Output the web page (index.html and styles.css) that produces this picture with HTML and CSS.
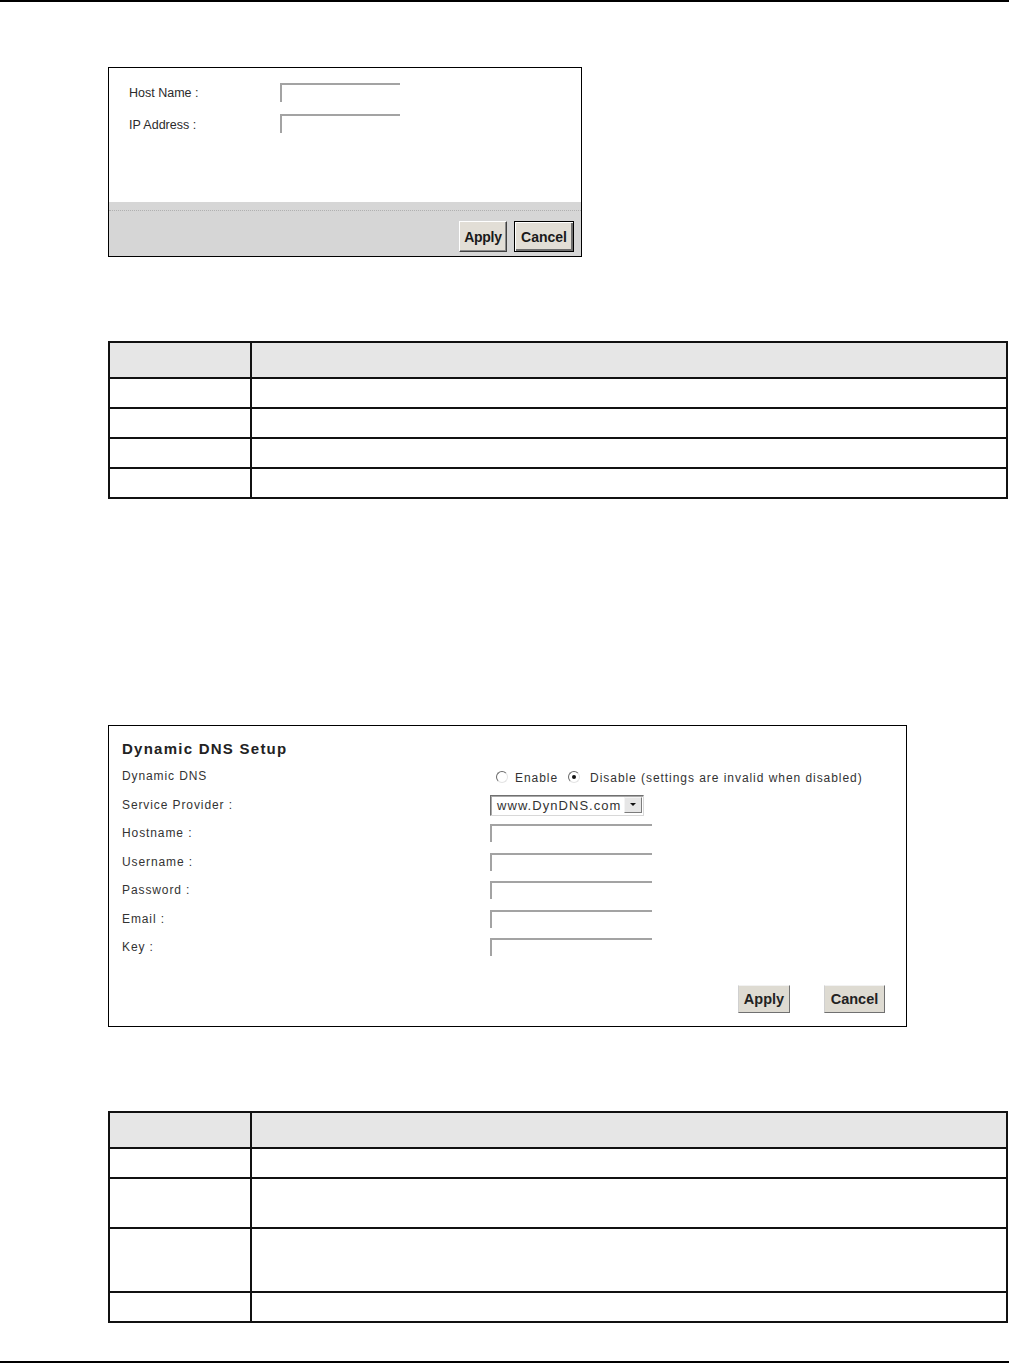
FILE: index.html
```html
<!DOCTYPE html>
<html lang="en">
<head>
    <meta charset="UTF-8">
    <meta name="viewport" content="width=device-width, initial-scale=1.0">
    <title>Dynamic DNS</title>
    <link rel="stylesheet" href="styles.css">
</head>
<body>
    <div class="rule rule-top"></div>

    <div class="page">
        <!-- host entry screen -->
        <div class="shot shot-host">
            <div class="shot-body">
                <div class="host-row">
                    <label>Host Name :</label>
                    <input type="text" class="text-box">
                </div>
                <div class="host-row">
                    <label>IP Address :</label>
                    <input type="text" class="text-box">
                </div>
            </div>
            <div class="shot-footer">
                <div class="footer-line"></div>
                <div class="btn-row">
                    <button class="btn btn-apply">Apply</button>
                    <button class="btn btn-cancel btn-focus">Cancel</button>
                </div>
            </div>
        </div>

        <table class="desc-table table-one">
            <tr class="head-row"><th class="col-label"></th><th></th></tr>
            <tr><td></td><td></td></tr>
            <tr><td></td><td></td></tr>
            <tr><td></td><td></td></tr>
            <tr><td></td><td></td></tr>
        </table>

        <!-- dynamic dns screen -->
        <div class="shot shot-ddns">
            <h3 class="ddns-title">Dynamic DNS Setup</h3>
            <div class="ddns-grid">
                <div class="ddns-label">Dynamic DNS</div>
                <div class="ddns-field radio-line">
                    <span class="radio"></span><span class="radio-text">Enable</span>
                    <span class="radio radio-on"></span><span class="radio-text">Disable (settings are invalid when disabled)</span>
                </div>

                <div class="ddns-label">Service Provider :</div>
                <div class="ddns-field">
                    <div class="select-box">
                        <span class="select-value">www.DynDNS.com</span>
                        <span class="select-arrow"></span>
                    </div>
                </div>

                <div class="ddns-label">Hostname :</div>
                <div class="ddns-field"><input type="text" class="text-box text-wide"></div>

                <div class="ddns-label">Username :</div>
                <div class="ddns-field"><input type="text" class="text-box text-wide"></div>

                <div class="ddns-label">Password :</div>
                <div class="ddns-field"><input type="password" class="text-box text-wide"></div>

                <div class="ddns-label">Email :</div>
                <div class="ddns-field"><input type="text" class="text-box text-wide"></div>

                <div class="ddns-label">Key :</div>
                <div class="ddns-field"><input type="text" class="text-box text-wide"></div>
            </div>
            <div class="ddns-buttons">
                <button class="btn btn-ddns btn-ddns-apply">Apply</button>
                <button class="btn btn-ddns btn-ddns-cancel">Cancel</button>
            </div>
        </div>

        <table class="desc-table table-two">
            <tr class="head-row"><th class="col-label"></th><th></th></tr>
            <tr><td></td><td></td></tr>
            <tr class="row-tall"><td></td><td></td></tr>
            <tr class="row-taller"><td></td><td></td></tr>
            <tr><td></td><td></td></tr>
        </table>
    </div>

    <div class="rule rule-bottom"></div>
</body>
</html>
```

FILE: styles.css
```css
:root {
    --ink: #2b2b2b;
    --frame-gray: #a3a3a3;
    --footer-gray: #d6d6d6;
    --btn-face: #e2ded6;
    --head-gray: #e6e6e6;
}
body {
    margin: 0;
    font-family: 'Liberation Sans', Arial, sans-serif;
    background: white;
    color: var(--ink);
}
.rule { border-top: 2px solid #000; }
.rule-bottom { margin-top: 38px; }
.page { padding-left: 108px; }

/* screenshot frames */
.shot { box-sizing: border-box; border: 1px solid #000; background: white; }
.shot-host {
    width: 474px; height: 190px; margin-top: 65px;
    display: flex; flex-direction: column;
}
.shot-body { flex: 1; padding: 15px 0 0 20px; }
.host-row { display: grid; grid-template-columns: 151px 120px; align-items: start; height: 31px; }
.host-row label { font-size: 12.5px; line-height: 20px; color: var(--ink); }
.host-row + .host-row label { margin-top: 1px; }

.text-box {
    box-sizing: border-box; width: 120px; height: 19px; padding: 0;
    border: 0; border-top: 2px solid var(--frame-gray); border-left: 2px solid var(--frame-gray);
    background: transparent; outline: none;
}

.shot-footer { height: 54px; box-sizing: border-box; background: var(--footer-gray); padding-top: 8px; }
.footer-line { border-top: 1px dotted #b0b0b0; }
.btn-row { display: flex; justify-content: flex-end; gap: 7px; padding: 10px 7px 0 0; }

.btn {
    font-family: 'Liberation Sans', Arial, sans-serif; font-weight: bold; font-size: 14px;
    color: #1a1a1a; background: var(--btn-face); padding: 0; cursor: pointer;
    border: 1px solid; border-color: #fff #404040 #404040 #fff;
    box-shadow: inset -1px -1px #8a8a8a;
}
.btn-apply { width: 48px; height: 31px; letter-spacing: -0.3px; }
.btn-cancel { width: 60px; height: 31px; }
.btn-focus { border: 1px solid #000; box-shadow: inset 1px 1px #fff, inset -2px -2px #6e6e6e; }

/* description tables */
.desc-table { width: 900px; border-collapse: collapse; margin-top: 84px; }
.desc-table th, .desc-table td { border: 2px solid #111; padding: 0; }
.desc-table .col-label { width: 140px; }
.head-row th { height: 34px; background: var(--head-gray); }
.desc-table td { height: 28px; }
.desc-table .row-tall td { height: 48px; }
.desc-table .row-taller td { height: 62px; }

/* dynamic dns frame */
.shot-ddns { width: 799px; height: 302px; margin-top: 226px; padding: 13px 21px 0 13px; }
.ddns-title { margin: 0 0 7px 0; font-size: 15px; line-height: 20px; letter-spacing: 1.25px; font-weight: bold; color: #222; }
.ddns-grid { display: grid; grid-template-columns: 368px 1fr; grid-auto-rows: 28.5px; }
.ddns-label { font-size: 12px; line-height: 20px; letter-spacing: 0.9px; color: #333; }
.ddns-field { padding-top: 1px; }
.radio-line { display: flex; align-items: center; height: 20px; padding-top: 2px; font-size: 12px; letter-spacing: 0.95px; color: #333; }
.radio {
    box-sizing: border-box; width: 12px; height: 12px; border-radius: 50%;
    border: 1px solid; border-color: #6a6a6a #e4e4e4 #e4e4e4 #6a6a6a;
    position: relative; margin-left: 6px; margin-top: -3px;
}
.radio + .radio-text { margin-left: 7px; }
.radio-text + .radio { margin-left: 10px; }
.radio-on + .radio-text { margin-left: 10px; }
.radio-on::after {
    content: ""; position: absolute; left: 3px; top: 3px;
    width: 4px; height: 4px; border-radius: 50%; background: #111;
}

.select-box {
    box-sizing: border-box; width: 154px; height: 21px; margin-top: -1px;
    display: flex; align-items: center; justify-content: space-between;
    border: 1px solid; border-color: #707070 #d8d8d8 #d8d8d8 #707070;
    box-shadow: inset 1px 1px #a8a8a8; background: white;
}
.select-value { font-size: 13px; letter-spacing: 1.05px; padding-left: 6px; color: #333; }
.select-arrow {
    box-sizing: border-box; width: 18px; height: 16px; margin-right: 1px;
    background: #e6e6e6; border: 1px solid; border-color: #f4f4f4 #7c7c7c #7c7c7c #f4f4f4;
    position: relative;
}
.select-arrow::after {
    content: ""; position: absolute; left: 5px; top: 5px;
    border-left: 3px solid transparent; border-right: 3px solid transparent; border-top: 3px solid #111;
}
.text-wide { width: 162px; height: 18px; }

.ddns-buttons { display: flex; justify-content: flex-end; gap: 34px; margin-top: 19.5px; }
.btn-ddns {
    height: 28px; font-size: 14.5px; color: #222;
    background: #dedbd2; border-color: #f2f2f2 #707070 #707070 #d0d0d0; box-shadow: none;
}
.btn-ddns-apply { width: 52px; }
.btn-ddns-cancel { width: 61px; }
```
